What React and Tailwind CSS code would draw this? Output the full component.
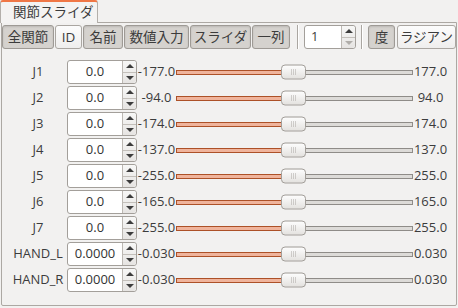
const rows = [
  { name: 'J1', value: '0.0', min: '-177.0', max: '177.0' },
  { name: 'J2', value: '0.0', min: '-94.0', max: '94.0' },
  { name: 'J3', value: '0.0', min: '-174.0', max: '174.0' },
  { name: 'J4', value: '0.0', min: '-137.0', max: '137.0' },
  { name: 'J5', value: '0.0', min: '-255.0', max: '255.0' },
  { name: 'J6', value: '0.0', min: '-165.0', max: '165.0' },
  { name: 'J7', value: '0.0', min: '-255.0', max: '255.0' },
  { name: 'HAND_L', value: '0.0000', min: '-0.030', max: '0.030' },
  { name: 'HAND_R', value: '0.0000', min: '-0.030', max: '0.030' },
];

const tools = [
  { label: '全関節', w: 'w-[52px]', on: true },
  { label: 'ID', w: 'w-[27px]', on: false },
  { label: '名前', w: 'w-[40px]', on: true },
  { label: '数値入力', w: 'w-[65px]', on: true },
  { label: 'スライダ', w: 'w-[61px]', on: true },
  { label: '一列', w: 'w-[38px]', on: true },
];

const ToolButton = ({ label, w, on }) => (
  <div
    className={`${w} h-[24px] flex items-center justify-center rounded-[3px] border whitespace-nowrap text-[13.5px] ${
      on
        ? 'bg-[#d5d2ce] border-[#9e9a95] shadow-[inset_0_1px_2px_rgba(0,0,0,0.12)]'
        : 'bg-gradient-to-b from-[#fcfcfc] to-[#efeeed] border-[#aaa6a1]'
    }`}
  >
    {label}
  </div>
);

const Separator = () => (
  <div className="w-[2px] h-[24px] border-l border-[#aaa6a1] border-r border-r-white" />
);

const Arrows = ({ downDisabled }) => (
  <div className="w-[14px] flex flex-col border-l border-[#bcb8b3] bg-gradient-to-b from-[#f7f7f6] to-[#e6e4e2] rounded-r-[3px]">
    <div className="flex-1 flex items-center justify-center border-b border-[#c3bfba]">
      <div className="w-0 h-0 border-x-[4px] border-x-transparent border-b-[4px] border-b-[#3c3c3c]" />
    </div>
    <div className="flex-1 flex items-center justify-center">
      <div
        className={`w-0 h-0 border-x-[4px] border-x-transparent border-t-[4px] ${
          downDisabled ? 'border-t-[#b0ada9]' : 'border-t-[#3c3c3c]'
        }`}
      />
    </div>
  </div>
);

const Handle = () => (
  <div className="absolute left-[105px] top-1/2 -translate-y-1/2 w-[25px] h-[15px] rounded-[4px] border border-[#a19d98] bg-gradient-to-b from-[#fdfdfd] to-[#e4e2df] flex items-center justify-center">
    <div className="grid grid-cols-3 gap-[1px]">
      {Array.from({ length: 9 }).map((_, i) => (
        <div key={i} className="w-[1px] h-[1px] bg-[#a9a6a2]" />
      ))}
    </div>
  </div>
);

const Slider = () => (
  <div className="relative w-[237px] h-full flex items-center">
    <div className="w-[106px] h-[5px] border border-[#ad5128] bg-[#f0b49c]" />
    <div className="flex-1 h-[5px] border border-[#8f8c88] bg-[#dddbd8]" />
    <Handle />
  </div>
);

export default function App() {
  return (
    <div
      className="w-[458px] h-[308px] bg-[#f2f1f0] text-[13px] text-[#3c3c3c] overflow-hidden"
      style={{ fontFamily: '"Open Sans", "Noto Sans CJK JP", sans-serif' }}
    >
      <div className="h-[22px] flex">
        <div className="relative z-10 w-[98px] h-[23px] flex items-center pl-[12px] rounded-t-[3px] border-x border-[#b3afaa] border-t-2 border-t-[#f07746] bg-[#f4f3f2] text-[13.5px]">
          関節スライダ
        </div>
      </div>
      <div className="ml-[1px] w-[456px] h-[284px] border border-[#aca8a3] rounded-b-[2px] bg-[#f2f1f0]">
        <div className="flex items-center gap-[1px] pt-[2px]">
          {tools.map((t) => (
            <ToolButton key={t.label} {...t} />
          ))}
          <div className="ml-[6px]">
            <Separator />
          </div>
          <div className="ml-[4px] w-[52px] h-[24px] flex border border-[#a39f9a] rounded-[3px] bg-white">
            <div className="flex-1 flex items-center pl-[6px]">1</div>
            <Arrows downDisabled />
          </div>
          <div className="ml-[4px]">
            <Separator />
          </div>
          <div className="ml-[4px] flex gap-[2px]">
            <ToolButton label="度" w="w-[27px]" on />
            <ToolButton label="ラジアン" w="w-[59px]" on={false} />
          </div>
        </div>
        <div className="mt-[11px] flex flex-col gap-[2px]">
          {rows.map((r) => (
            <div key={r.name} className="h-[24px] flex items-center">
              <div className="w-[65px] pl-[7px] text-center whitespace-nowrap">{r.name}</div>
              <div className="w-[70px] h-[24px] flex border border-[#a39f9a] rounded-[3px] bg-white">
                <div className="flex-1 flex items-center justify-center text-[#333]">{r.value}</div>
                <Arrows />
              </div>
              <div className="w-[39px] text-center whitespace-nowrap">{r.min}</div>
              <Slider />
              <div className="w-[35px] text-center whitespace-nowrap">{r.max}</div>
            </div>
          ))}
        </div>
      </div>
    </div>
  );
}
